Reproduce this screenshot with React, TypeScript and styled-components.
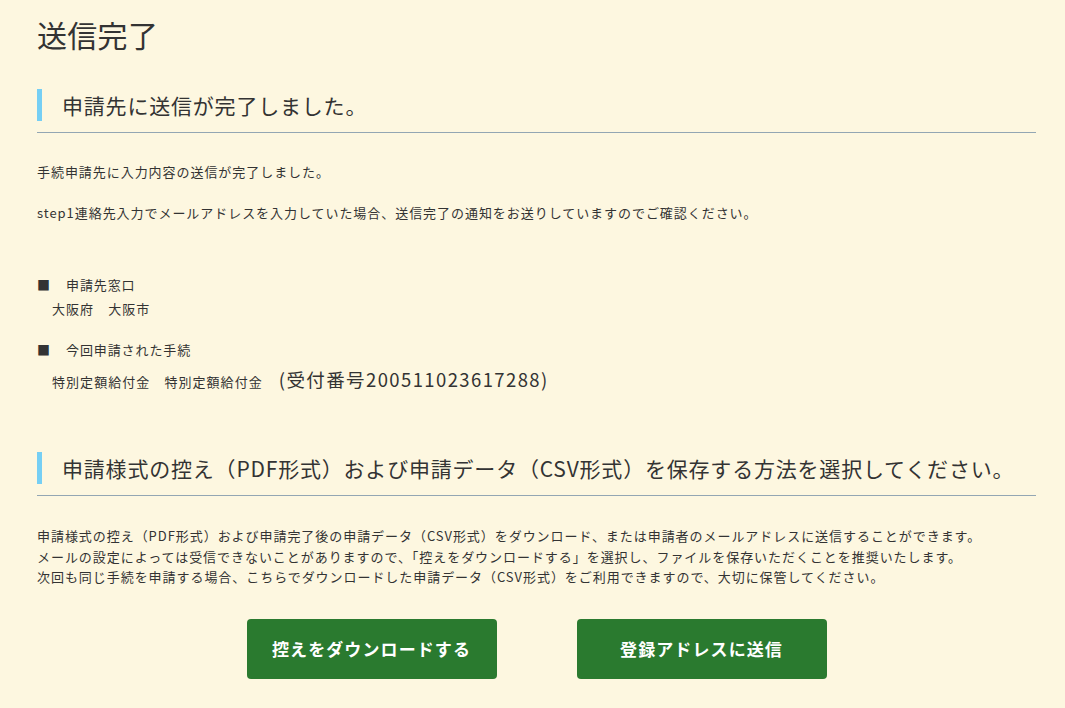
import React from "react";
import styled, { createGlobalStyle } from "styled-components";

const GlobalStyle = createGlobalStyle`
  html, body {
    margin: 0;
    padding: 0;
    background: #fdf7e0;
  }
  body {
    font-family: "Noto Sans CJK JP", "Noto Sans", sans-serif;
    color: #333333;
  }
`;

const Page = styled.main`
  display: flex;
  flex-direction: column;
  padding: 0 29px 40px 37px;
  min-height: 708px;
  box-sizing: border-box;
`;

const Title = styled.h1`
  margin: 16px 0 0;
  font-size: 30px;
  line-height: 36px;
  font-weight: 400;
  letter-spacing: 0.3px;
`;

const SectionHeading = styled.h2<{ $top: number }>`
  margin: ${(p) => p.$top}px 0 0;
  padding-bottom: 11px;
  border-bottom: 1px solid #93a6b3;
  font-size: 21px;
  font-weight: 400;
  letter-spacing: 0.8px;
`;

const HeadingText = styled.span`
  display: block;
  border-left: 5px solid #76cff4;
  padding-left: 20px;
  line-height: 32px;
`;

const Text = styled.p<{ $top: number }>`
  margin: ${(p) => p.$top}px 0 0;
  font-size: 13px;
  line-height: 20px;
  letter-spacing: 0.95px;
`;

const ItemLabel = styled.div<{ $top: number }>`
  margin-top: ${(p) => p.$top}px;
  display: flex;
  font-size: 13px;
  line-height: 20px;
  letter-spacing: 0.9px;
`;

const Square = styled.span`
  width: 29px;
  flex: none;
`;

const ItemValue = styled.div<{ $top: number; $lh: number }>`
  margin-top: ${(p) => p.$top}px;
  padding-left: 15px;
  display: flex;
  align-items: baseline;
  font-size: 13px;
  line-height: ${(p) => p.$lh}px;
  letter-spacing: 1.05px;
`;

const Receipt = styled.span`
  margin-left: 16px;
  font-size: 18.5px;
  letter-spacing: 1.4px;
`;

const Lines = styled.div`
  margin-top: 30px;
  font-size: 13px;
  line-height: 20.5px;
  letter-spacing: 0.95px;
  white-space: nowrap;
`;

const ButtonRow = styled.div`
  margin-top: 31px;
  display: flex;
  justify-content: center;
  gap: 80px;
`;

const Button = styled.button`
  width: 250px;
  height: 60px;
  border: none;
  border-radius: 4px;
  background: #2a7a2f;
  color: #ffffff;
  font-family: "Noto Sans CJK JP", sans-serif;
  font-size: 17px;
  font-weight: 700;
  letter-spacing: 1.1px;
  cursor: pointer;
`;

export default function App() {
  return (
    <>
      <GlobalStyle />
      <Page>
        <Title>送信完了</Title>
        <SectionHeading $top={37}>
          <HeadingText>申請先に送信が完了しました。</HeadingText>
        </SectionHeading>
        <Text $top={29}>手続申請先に入力内容の送信が完了しました。</Text>
        <Text $top={21}>
          step1連絡先入力でメールアドレスを入力していた場合、送信完了の通知をお送りしていますのでご確認ください。
        </Text>
        <ItemLabel $top={52}>
          <Square>■</Square>
          <span>申請先窓口</span>
        </ItemLabel>
        <ItemValue $top={4} $lh={20}>大阪府　大阪市</ItemValue>
        <ItemLabel $top={21}>
          <Square>■</Square>
          <span>今回申請された手続</span>
        </ItemLabel>
        <ItemValue $top={7} $lh={24}>
          <span>特別定額給付金　特別定額給付金</span>
          <Receipt>(受付番号200511023617288)</Receipt>
        </ItemValue>
        <SectionHeading $top={58}>
          <HeadingText>
            申請様式の控え（PDF形式）および申請データ（CSV形式）を保存する方法を選択してください。
          </HeadingText>
        </SectionHeading>
        <Lines>
          申請様式の控え（PDF形式）および申請完了後の申請データ（CSV形式）をダウンロード、または申請者のメールアドレスに送信することができます。
          <br />
          メールの設定によっては受信できないことがありますので、「控えをダウンロードする」を選択し、ファイルを保存いただくことを推奨いたします。
          <br />
          次回も同じ手続を申請する場合、こちらでダウンロードした申請データ（CSV形式）をご利用できますので、大切に保管してください。
        </Lines>
        <ButtonRow>
          <Button type="button">控えをダウンロードする</Button>
          <Button type="button">登録アドレスに送信</Button>
        </ButtonRow>
      </Page>
    </>
  );
}
